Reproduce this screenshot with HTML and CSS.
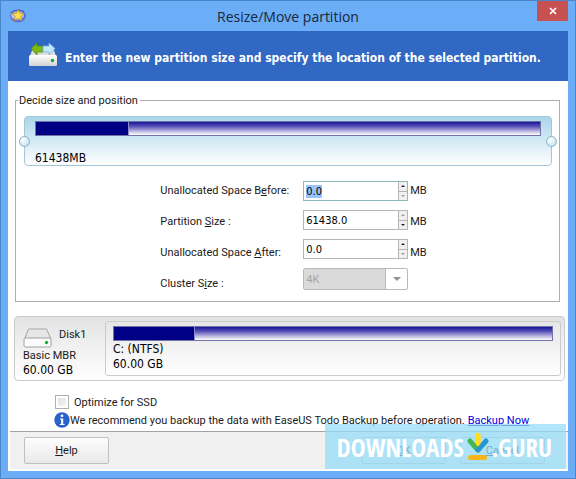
FILE: index.html
```html
<!DOCTYPE html>
<html lang="en">

<head>
    <meta charset="UTF-8">
    <meta name="viewport" content="width=device-width, initial-scale=1.0">
    <title>Resize/Move partition</title>
    <link rel="stylesheet" href="styles.css">
</head>

<body>
    <div class="window">
        <!-- Title bar -->
        <div class="titlebar">
            <svg class="app-icon" width="18" height="16" viewBox="0 0 18 16">
                <ellipse cx="9" cy="8" rx="8" ry="6.5" fill="#5f73c4" />
                <ellipse cx="8.500" cy="7" rx="6.500" ry="5" fill="#b9c4ee" />
                <path d="M2 5Q8 0 15 4" fill="none" stroke="#3c66bb" stroke-width="1.500" />
                <path d="M9 1.500l1.700 3.700 4.300.4-3.200 2.800 1.100 4.300L9 10.300l-3.800 2.200 1-4.100L3 5.700l4.300-.4z" fill="#ffdf4a" stroke="#bd8427" stroke-width=".7" />
            </svg>
            <h1 class="title">Resize/Move partition</h1>
            <button type="button" class="close" aria-label="Close">
                <svg width="8" height="8" viewBox="0 0 8 8">
                    <path d="M1 1l6 6M7 1l-6 6" stroke="#fff" stroke-width="1.700" />
                </svg>
            </button>
        </div>

        <div class="client">
            <div class="banner">
                <svg class="banner-icon" width="30" height="26" viewBox="0 0 30 26">
                    <defs>
                        <linearGradient id="drive" x1="0" y1="0" x2="0" y2="1">
                            <stop offset="0" stop-color="#fff" />
                            <stop offset="1" stop-color="#d3d3d3" />
                        </linearGradient>
                    </defs>
                    <path d="M5 7h20l3 8H2z" fill="#dedede" />
                    <rect x="1" y="14" width="28" height="11" rx="1.500" fill="url(#drive)" />
                    <path d="M3 7.500L9 2v3h6v6H9v3z" fill="#7cba13" stroke="#4b8b10" stroke-width=".8" />
                    <path d="M27 7.500L21 2v3h-6v6h6v3z" fill="#bfe6fb" stroke="#77b5dc" stroke-width=".8" />
                    <circle cx="24.500" cy="19.500" r="1.700" fill="#12a32c" />
                </svg>
                <p class="banner-text">Enter the new partition size and specify the location of the selected partition.</p>
            </div>

            <div class="content">
                <fieldset class="group">
                    <legend>Decide size and position</legend>
                    <div class="resizer">
                        <span class="handle handle-left"></span>
                        <span class="handle handle-right"></span>
                        <div class="bar"><div class="used"></div></div>
                        <p class="big">61438MB</p>
                    </div>
                    <div class="form">
                        <div class="labels">
                            <label for="before">Unallocated Space B<u>e</u>fore:</label>
                            <label for="size">Partition <u>S</u>ize :</label>
                            <label for="after">Unallocated Space <u>A</u>fter:</label>
                            <label for="cluster">Cluster S<u>i</u>ze :</label>
                        </div>
                        <div class="fields">
                            <div class="spin spin-active">
                                <input type="text" id="before" value="0.0">
                                <div class="arrows">
                                    <button type="button" class="up" aria-label="Increase"></button>
                                    <button type="button" class="down" aria-label="Decrease" disabled></button>
                                </div>
                            </div>
                            <div class="spin">
                                <input type="text" id="size" value="61438.0">
                                <div class="arrows">
                                    <button type="button" class="up" aria-label="Increase" disabled></button>
                                    <button type="button" class="down" aria-label="Decrease"></button>
                                </div>
                            </div>
                            <div class="spin">
                                <input type="text" id="after" value="0.0">
                                <div class="arrows">
                                    <button type="button" class="up" aria-label="Increase"></button>
                                    <button type="button" class="down" aria-label="Decrease" disabled></button>
                                </div>
                            </div>
                            <div class="combo">
                                <select id="cluster" disabled>
                                    <option>4K</option>
                                </select>
                                <span class="combo-arrow"></span>
                            </div>
                        </div>
                        <div class="units">
                            <span>MB</span>
                            <span>MB</span>
                            <span>MB</span>
                        </div>
                    </div>
                </fieldset>

                <!-- Disk map -->
                <div class="disk">
                    <div class="disk-info">
                        <div class="disk-head">
                            <svg width="30" height="20" viewBox="0 0 30 20">
                                <path d="M5.500 1h18L28 11H1.500z" fill="#e6e6e6" stroke="#a5a5a5" />
                                <rect x="1" y="10" width="27" height="9" rx="1.500" fill="#fbfbfb" stroke="#a0a0a0" />
                                <circle cx="23.500" cy="14.500" r="1.700" fill="#19b030" />
                            </svg>
                            <span>Disk1</span>
                        </div>
                        <p>Basic MBR</p>
                        <p class="big">60.00 GB</p>
                    </div>
                    <div class="volume">
                        <div class="bar"><div class="used"></div></div>
                        <p class="big">C: (NTFS)</p>
                        <p class="big">60.00 GB</p>
                    </div>
                </div>

                <div class="options">
                    <div class="option">
                        <input type="checkbox" id="ssd">
                        <label for="ssd">Optimize for SSD</label>
                    </div>
                    <div class="notice">
                        <svg width="16" height="16" viewBox="0 0 16 16">
                            <circle cx="8" cy="8" r="7.700" fill="#2862cc" />
                            <circle cx="8" cy="3.800" r="1.400" fill="#fff" />
                            <path d="M6 6.500h3.200v5.500h1.300v1H5.800v-1h1.300V7.500H6z" fill="#fff" />
                        </svg>
                        <span>We recommend you backup the data with EaseUS Todo Backup before operation.</span>
                        <a href="#">Backup Now</a>
                    </div>
                </div>
            </div>

            <div class="footer">
                <button type="button" class="btn btn-help"><u>H</u>elp</button>
                <button type="button" class="btn"><u>O</u>K</button>
                <button type="button" class="btn"><u>C</u>ancel</button>
            </div>
        </div>

        <div class="watermark">
            <span>DOWNLOADS</span>
            <svg width="22" height="28" viewBox="0 0 22 28">
                <path d="M11 3v12" stroke="#ffdc1c" stroke-width="5" />
                <path d="M3 8l8 9" stroke="#46b653" stroke-width="5" stroke-linecap="round" />
                <path d="M19 8l-8 9" stroke="#2996d4" stroke-width="5" stroke-linecap="round" />
                <path d="M8.500 11L11 13.500l2.500-2.500V2a2.500 2.500 0 0 0-5 0z" fill="#ffdc1c" />
                <rect x="1" y="22" width="19" height="5" rx="2.500" fill="#f6b51c" />
            </svg>
            <span>.GURU</span>
        </div>
    </div>

    <script>
        document.getElementById("before").focus();
        document.getElementById("before").select();
    </script>
</body>

</html>
```
FILE: styles.css
```css
* {
    box-sizing: border-box;
}

body {
    margin: 0;
    font-family: Roboto, "Liberation Sans", sans-serif;
    font-size: 11px;
    color: #1a1a1a;
}

p, h1 {
    margin: 0;
}

button, input, select {
    font-family: inherit;
    font-size: inherit;
    color: inherit;
    margin: 0;
}

.window {
    position: relative;
    display: flex;
    flex-direction: column;
    min-height: 100vh;
    padding: 0 7px 7px;
    background-color: #6badf6;
    border: 1px solid #4a86c8;
}

.titlebar {
    display: flex;
    align-items: center;
    height: 30px;
}

.app-icon {
    margin-left: 1px;
}

.title {
    flex: 1;
    padding-left: 12px;
    font-family: "Open Sans", "Noto Sans", sans-serif;
    font-size: 14px;
    font-weight: normal;
    text-align: center;
    color: #17293d;
}

.close {
    display: flex;
    align-items: center;
    justify-content: center;
    align-self: flex-start;
    width: 31px;
    height: 20px;
    padding: 0;
    border: 0;
    background-color: #c75050;
}

.client {
    flex: 1;
    display: flex;
    flex-direction: column;
    background-color: #fff;
}

.banner {
    display: flex;
    align-items: center;
    gap: 7px;
    height: 50px;
    padding-left: 20px;
    background-color: #3068c4;
}

.banner-icon {
    margin-bottom: 4px;
}

.banner-text {
    padding-top: 3px;
    font-family: "DejaVu Sans Condensed", sans-serif;
    font-size: 12px;
    font-weight: bold;
    color: #fff;
    white-space: nowrap;
}

.content {
    flex: 1;
    padding: 12px 3px 0 6px;
}

.group {
    margin: 0 5px 0 1px;
    padding: 8px 7px 2px 8px;
    border: 1px solid #adadad;
}

.group legend {
    margin-left: -6px;
    padding: 0 2px 0 1px;
    line-height: 15px;
}

.resizer {
    position: relative;
    height: 50px;
    padding: 4px 10px 0;
    border: 1px solid #a6c6d6;
    border-radius: 4px;
    background: linear-gradient(#a9d6ea, #cfe8f4 45%, #fff);
}

.handle {
    position: absolute;
    top: 19px;
    width: 11px;
    height: 11px;
    border: 1px solid #85b0c4;
    border-radius: 50%;
    background: radial-gradient(circle at 35% 30%, #fff, #b5dded);
}

.handle-left {
    left: -6px;
}

.handle-right {
    right: -6px;
}

.bar {
    height: 15px;
    border: 1px solid #7272a8;
    background: linear-gradient(#15159a, #5c54b8 35%, #c6c2e6 75%, #fff);
}

.used {
    width: 18.5%;
    height: 100%;
    border-right: 1px solid #8a8ac8;
    background-color: #000084;
}

.big {
    font-family: "DejaVu Sans Condensed", sans-serif;
    font-size: 12px;
    line-height: 15px;
    color: #000;
}

.resizer .big {
    margin-top: 15px;
}

.form {
    display: flex;
    justify-content: center;
    padding: 9px 0 0 11px;
}

.labels, .units {
    display: flex;
    flex-direction: column;
    line-height: 31px;
}

.labels {
    width: 143px;
}

.fields {
    display: flex;
    flex-direction: column;
    gap: 9px;
    width: 105px;
    padding-top: 6px;
}

.units {
    padding-left: 2px;
}

.spin {
    display: flex;
    height: 20px;
    border: 1px solid #b5b5b5;
}

.spin-active {
    border-color: #8fb8b8;
}

.spin input {
    flex: 1;
    min-width: 0;
    padding: 0 2px;
    border: 0;
    outline: 0;
    font-family: "DejaVu Sans Condensed", sans-serif;
    font-size: 11px;
    color: #000;
}

.spin input::selection {
    background-color: #99c3fa;
    color: #000;
}

.arrows {
    display: flex;
    flex-direction: column;
    width: 9px;
    border-left: 1px solid #b5b5b5;
}

.arrows button {
    display: flex;
    flex: 1;
    align-items: center;
    justify-content: center;
    padding: 0;
    border: 0;
    background-color: #f0f0f0;
}

.arrows button + button {
    border-top: 1px solid #b5b5b5;
}

.up::before, .down::before {
    content: "";
    border: 2px solid transparent;
}

.up::before {
    border-top: 0;
    border-bottom-color: #222;
}

.down::before {
    border-bottom: 0;
    border-top-color: #222;
}

.arrows button:disabled::before {
    opacity: 0.4;
}

.combo {
    display: flex;
    height: 22px;
    border: 1px solid #b8b8b8;
    border-radius: 2px;
}

.combo select {
    flex: 1;
    min-width: 0;
    padding: 0 2px;
    border: 0;
    appearance: none;
    background-color: #dadada;
    color: #a5a5a5;
    opacity: 1;
}

.combo-arrow {
    display: flex;
    align-items: center;
    justify-content: center;
    width: 22px;
    border-left: 1px solid #b8b8b8;
}

.combo-arrow::before {
    content: "";
    border: 4px solid transparent;
    border-top-color: #929292;
    border-bottom: 0;
}

.disk {
    display: flex;
    height: 65px;
    margin-top: 14px;
    padding: 4px 3px 4px 8px;
    border: 1px solid #cbcbcb;
    border-radius: 4px;
    background: linear-gradient(#e3e3e3, #fff);
}

.disk-info {
    width: 82px;
    padding-top: 7px;
}

.disk-head {
    display: flex;
    gap: 6px;
    line-height: 14px;
}

.disk-info p {
    line-height: 15px;
}

.volume {
    flex: 1;
    padding: 4px 7px 0;
    border: 1px solid #cbcbcb;
    border-radius: 3px;
    background: linear-gradient(#e6e6e6, #fff);
}

.volume .bar {
    margin-bottom: 1px;
}

.options {
    padding: 12px 0 0 40px;
}

.option, .notice {
    display: flex;
    align-items: center;
    height: 18px;
}

.option {
    gap: 5px;
    padding-left: 1px;
}

.option input {
    width: 14px;
    height: 14px;
    border: 1px solid #b0b0b0;
    appearance: none;
    background: linear-gradient(135deg, #dcdcdc, #fafafa);
    box-shadow: inset 0 0 0 2px #fff;
}

.notice {
    white-space: nowrap;
}

.notice a {
    margin-left: 3px;
    color: #0000e0;
}

.footer {
    display: flex;
    gap: 14px;
    height: 40px;
    margin-left: 2px;
    padding: 5px 23px 0 14px;
    border-top: 1px solid #a3a3a3;
    border-bottom: 2px solid #fff;
    background-color: #f0f0f0;
}

.btn {
    width: 85px;
    height: 27px;
    border: 1px solid #c0c0c0;
    border-radius: 2px;
    background: linear-gradient(#fdfdfd, #e9e9e9);
}

.btn-help {
    margin-right: auto;
}

/* Site overlay in the bottom right corner */
.watermark {
    position: absolute;
    right: 9px;
    bottom: 9px;
    display: flex;
    align-items: center;
    justify-content: center;
    gap: 3px;
    width: 241px;
    height: 45px;
    padding-right: 2px;
    background-color: rgba(150, 220, 248, 0.75);
    color: #fff;
    font-family: "Open Sans Condensed", "Liberation Sans Narrow", "Open Sans", sans-serif;
    font-size: 25px;
    font-weight: bold;
}
```
